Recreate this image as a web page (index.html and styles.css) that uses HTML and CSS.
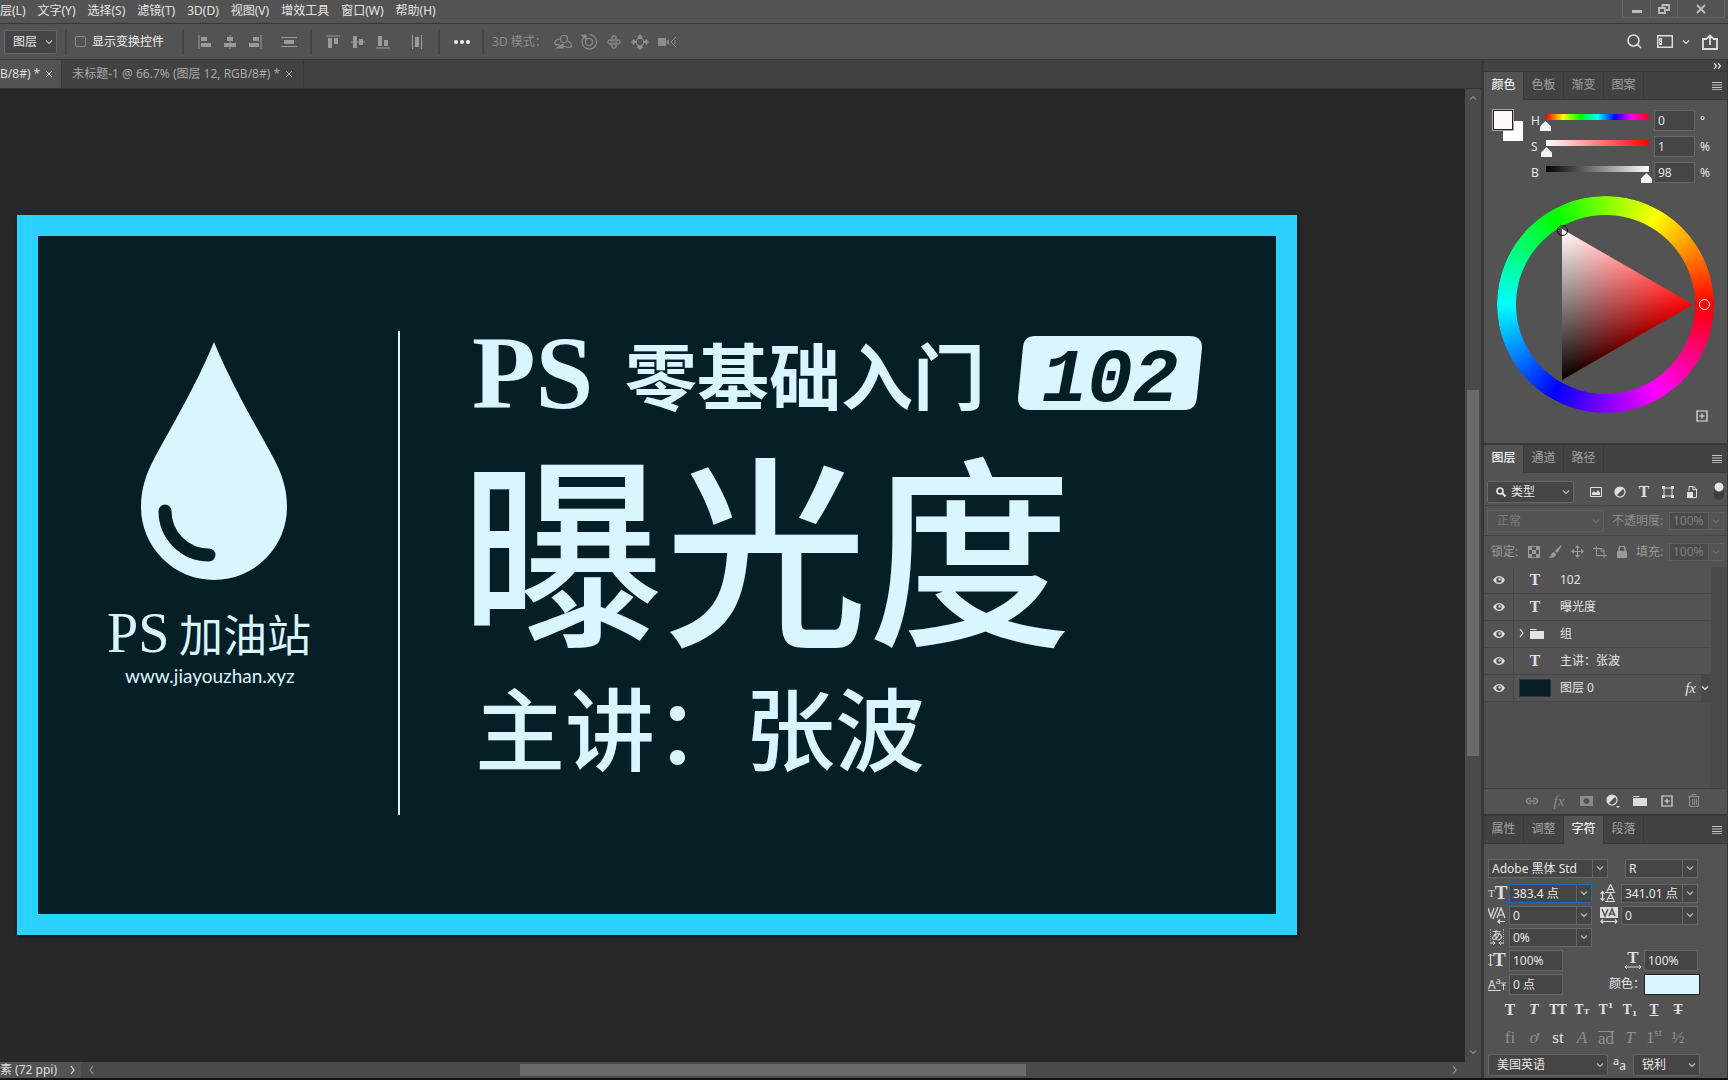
FILE: index.html
```html
<!DOCTYPE html>
<html lang="zh-CN">
<head>
<meta charset="utf-8">
<title>未标题-1</title>
<link rel="stylesheet" href="styles.css">
</head>
<body>
<svg class="defs" aria-hidden="true">
  <symbol id="chev" viewBox="0 0 8 8"><path d="M1 2.500l3 3 3-3" fill="none" stroke="currentColor" stroke-width="1.200"/></symbol>
  <symbol id="chevr" viewBox="0 0 8 10"><path d="M2 1l3 4-3 4" fill="none" stroke="currentColor" stroke-width="1.200"/></symbol>
  <symbol id="burger" viewBox="0 0 10 8"><path d="M0 .5h10M0 3h10M0 5.500h10M0 7.700h10" stroke="currentColor"/></symbol>
  <symbol id="eye" viewBox="0 0 12 8"><path d="M0 4C2 1 4 0 6 0s4 1 6 4c-2 3-4 4-6 4S2 7 0 4z" fill="currentColor"/><circle cx="6" cy="4" r="2.700" fill="#484848"/><circle cx="6.500" cy="3.500" r="1.200" fill="currentColor"/></symbol>
  <symbol id="folder" viewBox="0 0 14 12"><path d="M0 1h6l1 1H0zM0 3h14v8H0z" fill="currentColor"/></symbol>
  <symbol id="half" viewBox="0 0 12 12"><circle cx="6" cy="6" r="5" fill="none" stroke="currentColor" stroke-width="1.200"/><path d="M9.600 2.400A5 5 0 1 0 2.400 9.600z" fill="currentColor"/></symbol>
  <symbol id="plus" viewBox="0 0 12 12"><path d="M1 1h10v10H1zM6 3.500v5M3.500 6h5" fill="none" stroke="currentColor" stroke-width="1.200"/></symbol>
  <symbol id="close" viewBox="0 0 8 8"><path d="M1 1l6 6M7 1l-6 6" stroke="currentColor"/></symbol>
</svg>

<header class="menubar">
  <nav class="menus">
    <button>层(L)</button><button>文字(Y)</button><button>选择(S)</button><button>滤镜(T)</button><button>3D(D)</button><button>视图(V)</button><button>增效工具</button><button>窗口(W)</button><button>帮助(H)</button>
  </nav>
  <div class="winbtns">
    <button aria-label="最小化"><svg width="10" height="8" viewBox="0 0 10 8"><path d="M0 5h10v3H0z" fill="currentColor"/></svg></button>
    <button aria-label="还原"><svg width="12" height="10" viewBox="0 0 12 10"><path d="M4.500 3V1h6.500v5H8M1 4h6v5H1z" fill="none" stroke="currentColor" stroke-width="1.800"/></svg></button>
    <button aria-label="关闭" class="wide"><svg width="10" height="10" viewBox="0 0 10 10"><path d="M1 1l8 8M9 1l-8 8" stroke="currentColor" stroke-width="2"/></svg></button>
  </div>
</header>

<section class="options">
  <span class="combo target"><select aria-label="自动选择"><option>图层</option></select><svg class="cv"><use href="#chev"/></svg></span>
  <i class="sep"></i>
  <label class="check"><input type="checkbox">显示变换控件</label>
  <i class="sep"></i>
  <div class="icons align">
    <button aria-label="左对齐"><svg width="14" height="14"><path d="M1 0v14" stroke="currentColor"/><path d="M3 2h6v4H3zM3 8h10v4H3z" fill="currentColor"/></svg></button>
    <button aria-label="水平居中"><svg width="14" height="14"><path d="M7 0v14" stroke="currentColor"/><path d="M4 2h6v4H4zM1 8h12v4H1z" fill="currentColor"/></svg></button>
    <button aria-label="右对齐"><svg width="14" height="14"><path d="M13 0v14" stroke="currentColor"/><path d="M5 2h6v4H5zM1 8h10v4H1z" fill="currentColor"/></svg></button>
  </div>
  <button class="ic" aria-label="垂直分布"><svg width="16" height="12"><path d="M0 1.500h16M0 10.500h16" stroke="currentColor"/><path d="M3 4h10v4H3z" fill="currentColor"/></svg></button>
  <i class="sep"></i>
  <div class="icons align">
    <button aria-label="顶对齐"><svg width="14" height="14"><path d="M0 1h14" stroke="currentColor"/><path d="M2 3h4v10H2zM8 3h4v6H8z" fill="currentColor"/></svg></button>
    <button aria-label="垂直居中"><svg width="14" height="14"><path d="M0 7h14" stroke="currentColor"/><path d="M2 1h4v12H2zM8 4h4v6H8z" fill="currentColor"/></svg></button>
    <button aria-label="底对齐"><svg width="14" height="14"><path d="M0 13h14" stroke="currentColor"/><path d="M2 1h4v10H2zM8 5h4v6H8z" fill="currentColor"/></svg></button>
  </div>
  <button class="ic" aria-label="水平分布"><svg width="12" height="14"><path d="M1.500 0v14M10.500 0v14" stroke="currentColor"/><path d="M4 2h4v10H4z" fill="currentColor"/></svg></button>
  <i class="sep"></i>
  <button class="ic bright" aria-label="更多"><svg width="16" height="6"><g fill="currentColor"><circle cx="2" cy="3" r="2"/><circle cx="8" cy="3" r="2"/><circle cx="14" cy="3" r="2"/></g></svg></button>
  <i class="sep"></i>
  <span class="mode">3D 模式：</span>
  <div class="icons three">
    <button aria-label="环绕"><svg width="18" height="14" viewBox="0 0 18 14" fill="none" stroke="currentColor" stroke-width="1.200"><circle cx="10" cy="4" r="3.500"/><path d="M6 4C2 4 0 7 1 9c1 1 3 1 5 1M14 6c3 2 4 4 3 6-2 1-5 0-8-1"/><path d="M3 13h6V9z" fill="currentColor"/></svg></button>
    <button aria-label="滚动"><svg width="16" height="16" viewBox="0 0 16 16" fill="none" stroke="currentColor" stroke-width="1.200"><circle cx="8" cy="8" r="3.500"/><path d="M5 1.500a7.200 7.200 0 1 0 4-.8M2.500 3.500A7 7 0 0 0 1 8"/><path d="M1 1.500l4-.5v4z" fill="currentColor"/></svg></button>
    <button aria-label="平移"><svg width="16" height="16" viewBox="0 0 16 16" fill="none" stroke="currentColor" stroke-width="1.200"><path d="M7 7V5H6A2.200 2.200 0 1 1 10 5H9v2h2V6a2.200 2.200 0 1 1 0 4V9H9v2h1a2.200 2.200 0 1 1-4 0h1V9H5v1A2.200 2.200 0 1 1 5 6v1z"/></svg></button>
    <button aria-label="滑动"><svg width="18" height="16" viewBox="0 0 18 16" fill="currentColor"><path d="M9 0l3 3-2 1v1H8V4L6 3zM9 16l3-2.500-1-2.500H7l-1 2.500zM0 8l3-3 1 2h2v2H4l-1 2zM18 8l-3-3-1 2h-2v2h2l1 2z"/><circle cx="9" cy="8" r="4" fill="none" stroke="currentColor"/></svg></button>
    <button aria-label="缩放"><svg width="18" height="12" viewBox="0 0 18 12"><path d="M0 2h8v8H0zM8 6l3-3v6z" fill="currentColor"/><path d="M18 1l-5 5 5 5M17 4v4" fill="none" stroke="currentColor"/></svg></button>
  </div>
  <div class="icons tools">
    <button aria-label="搜索"><svg width="15" height="15" viewBox="0 0 15 15" fill="none" stroke="currentColor" stroke-width="1.600"><circle cx="6.500" cy="6.500" r="5.500"/><path d="M10.500 10.500L14 14"/></svg></button>
    <button class="ws" aria-label="工作区"><svg width="16" height="13" viewBox="0 0 16 13"><path d="M.7.7h14.600v11.600H.7z" fill="none" stroke="currentColor" stroke-width="1.400"/><path d="M2 3h3v7H2z" fill="currentColor"/><path d="M3 5h1M3 7.500h1" stroke="#535353"/></svg><svg width="8" height="8"><use href="#chev"/></svg></button>
    <button aria-label="共享"><svg width="16" height="16" viewBox="0 0 16 16" fill="none" stroke="currentColor" stroke-width="1.800"><path d="M5 5H1v10h14V5h-4M8 11V2M5 4.500L8 1.500l3 3"/></svg></button>
  </div>
</section>

<div class="workspace">
  <main class="document">
    <div class="doctabs">
      <button class="doctab on">B/8#) *<svg width="8" height="8"><use href="#close"/></svg></button>
      <button class="doctab">未标题-1 @ 66.7% (图层 12, RGB/8#) *<svg width="8" height="8"><use href="#close"/></svg></button>
    </div>
    <div class="stage">
      <div class="pasteboard">
        <article class="artboard">
          <div class="brand">
            <svg class="drop" width="146" height="238" viewBox="0 0 146 238"><path d="M73 0C92 46 117 87 133 117 141 132 146 147 146 165a73 73 0 0 1-146 0C0 147 5 132 13 117 29 87 54 46 73 0z" fill="#d9f6ff"/><path d="M24 169a44 44 0 0 0 44 44" fill="none" stroke="#061f27" stroke-width="13" stroke-linecap="round"/></svg>
            <p class="brandname"><span class="latin">PS</span>加油站</p>
            <p class="url">www.jiayouzhan.xyz</p>
          </div>
          <div class="copy">
            <div class="series"><span class="ps">PS</span><span class="course">零基础入门</span>
              <span class="badge"><svg width="184" height="74" viewBox="0 0 184 74"><path d="M17 0H172Q184 0 184 12L179 61Q178 74 166 74H12Q0 74 0 62L5 11Q6 0 17 0z" fill="#d9f6ff"/></svg><b>102</b></span></div>
            <h1>曝光度</h1>
            <p class="speaker">主讲：张波</p>
          </div>
        </article>
      </div>
      <div class="vscroll"><svg width="8" height="8" class="up"><use href="#chev"/></svg><i></i><svg width="8" height="8" class="down"><use href="#chev"/></svg></div>
    </div>
    <footer class="status">
      <div class="info"><span>素 (72 ppi)</span><svg width="8" height="10"><use href="#chevr"/></svg></div>
      <svg width="8" height="10" class="flip"><use href="#chevr"/></svg>
      <div class="htrack"><i></i></div>
      <svg width="8" height="10"><use href="#chevr"/></svg>
      <span class="corner"></span>
    </footer>
  </main>

  <aside class="panels">
    <div class="strip"><svg width="8" height="6" viewBox="0 0 8 6"><path d="M1 0l2.500 3L1 6M5 0l2.500 3L5 6" fill="none" stroke="currentColor" stroke-width="1.200"/></svg></div>
    <section class="panel">
      <div class="tabs"><button class="on">颜色</button><button>色板</button><button>渐变</button><button>图案</button><svg class="burger" width="10" height="8"><use href="#burger"/></svg></div>
      <div class="color">
        <div class="hsb">
          <div class="swatches"><i class="bgc"></i><i class="fgc"></i></div>
          <div class="sliders">
            <div class="sl"><label for="h">H</label><input id="h" class="hue" type="range" min="0" max="360" value="0"><input type="text" aria-label="H 值" value="0"><span>°</span></div>
            <div class="sl"><label for="s">S</label><input id="s" class="sat" type="range" value="1"><input type="text" aria-label="S 值" value="1"><span>%</span></div>
            <div class="sl"><label for="b">B</label><input id="b" class="bri" type="range" value="98"><input type="text" aria-label="B 值" value="98"><span>%</span></div>
          </div>
        </div>
        <div class="wheel"><div class="ring"></div><div class="tri"></div><i class="mark dark"></i><i class="mark light"></i></div>
        <button class="add" aria-label="添加到色板"><svg width="12" height="12"><use href="#plus"/></svg></button>
      </div>
    </section>

    <section class="panel">
      <div class="tabs"><button class="on">图层</button><button>通道</button><button>路径</button><svg class="burger" width="10" height="8"><use href="#burger"/></svg></div>
      <div class="row filter">
        <span class="combo type"><svg class="mag" width="10" height="10" viewBox="0 0 10 10" fill="none" stroke="currentColor"><circle cx="4" cy="4" r="3" stroke-width="1.600"/><path d="M6 6l3.500 3.500" stroke-width="2"/></svg><select aria-label="过滤类型"><option>类型</option></select><svg class="cv"><use href="#chev"/></svg></span>
        <div class="icons kinds">
          <button aria-label="像素"><svg width="12" height="10"><path d="M.5.5h11v9H.5z" fill="none" stroke="currentColor"/><path d="M2 8V6l2-2 2 2 2-3 2 3v2z" fill="currentColor"/></svg></button>
          <button aria-label="调整"><svg width="12" height="12"><use href="#half"/></svg></button>
          <button aria-label="文字" class="tee">T</button>
          <button aria-label="形状"><svg width="12" height="12"><path d="M2 2h8v8H2z" fill="none" stroke="currentColor"/><path d="M0 0h3v3H0zM9 0h3v3H9zM0 9h3v3H0zM9 9h3v3H9z" fill="currentColor"/></svg></button>
          <button aria-label="智能对象"><svg width="12" height="12"><path d="M3 5V.5h4.500L10.500 3v8.500H7M7 0v3.500h3.500" fill="none" stroke="currentColor"/><path d="M1 6h6v6H1z" fill="currentColor"/></svg></button>
        </div>
        <span class="toggle"></span>
      </div>
      <div class="row blend dim">
        <span class="combo"><select aria-label="混合模式"><option>正常</option></select><svg class="cv"><use href="#chev"/></svg></span>
        <label for="op">不透明度:</label><span class="combo num"><input id="op" type="text" value="100%"><svg class="cv"><use href="#chev"/></svg></span>
      </div>
      <div class="row lock dim">
        <span>锁定:</span>
        <div class="icons locks">
          <button aria-label="透明像素"><svg width="12" height="12"><path d="M.5.5h11v11H.5z" fill="none" stroke="currentColor"/><path d="M1 1h3v3H1zM8 1h3v3H8zM4 4h4v4H4zM1 8h3v3H1zM8 8h3v3H8z" fill="currentColor"/></svg></button>
          <button aria-label="图像像素"><svg width="13" height="13"><path d="M12 0c1 1 0 2 0 2L8 8 6 6zM5 7l2 2c0 3-4 4-7 4 2-2 2-5 5-6z" fill="currentColor"/></svg></button>
          <button aria-label="位置"><svg width="13" height="13"><path d="M6.500 1v11M1 6.500h11" stroke="currentColor"/><path d="M6.500 0L9 3H4zM6.500 13L9 10H4zM0 6.500L3 4v5zM13 6.500L10 4v5z" fill="currentColor"/></svg></button>
          <button aria-label="画板"><svg width="14" height="12"><path d="M0 2.500h9l2 2V12M3.500 0v9.500H14M8 2v3h3" fill="none" stroke="currentColor"/></svg></button>
          <button aria-label="全部"><svg width="10" height="12"><path d="M0 5h10v7H0z" fill="currentColor"/><path d="M2 5V3a3 3 0 0 1 6 0v2" fill="none" stroke="currentColor" stroke-width="1.500"/></svg></button>
        </div>
        <label for="fl">填充:</label><span class="combo num"><input id="fl" type="text" value="100%"><svg class="cv"><use href="#chev"/></svg></span>
      </div>
      <ul class="layers">
        <li><button class="eye" aria-label="可见"><svg width="12" height="8"><use href="#eye"/></svg></button><span class="thumb tee">T</span><span class="name">102</span></li>
        <li><button class="eye" aria-label="可见"><svg width="12" height="8"><use href="#eye"/></svg></button><span class="thumb tee">T</span><span class="name">曝光度</span></li>
        <li><button class="eye" aria-label="可见"><svg width="12" height="8"><use href="#eye"/></svg></button><span class="thumb group"><svg width="8" height="10"><use href="#chevr"/></svg><svg width="14" height="12"><use href="#folder"/></svg></span><span class="name">组</span></li>
        <li><button class="eye" aria-label="可见"><svg width="12" height="8"><use href="#eye"/></svg></button><span class="thumb tee">T</span><span class="name">主讲：张波</span></li>
        <li><button class="eye" aria-label="可见"><svg width="12" height="8"><use href="#eye"/></svg></button><span class="thumb"><i class="pic"></i></span><span class="name">图层 0</span><em>fx</em><span class="fold"><svg width="8" height="8"><use href="#chev"/></svg></span></li>
      </ul>
      <div class="icons layerbar">
        <button aria-label="链接" class="off"><svg width="14" height="8" viewBox="0 0 14 8" fill="none" stroke="currentColor" stroke-width="1.400"><path d="M6 1.500H4a2.500 2.500 0 0 0 0 5h2M8 1.500h2a2.500 2.500 0 0 1 0 5H8M4 4h6"/></svg></button>
        <button class="off fx">fx</button>
        <button aria-label="蒙版" class="off"><svg width="13" height="10"><path fill-rule="evenodd" d="M0 0h13v10H0zM6.500 2a3 3 0 1 0 .01 0z" fill="currentColor"/></svg></button>
        <button aria-label="调整图层"><svg width="14" height="14" viewBox="0 0 14 14"><use href="#half" width="12" height="12"/><path d="M10 12h4l-2 2z" fill="currentColor"/></svg></button>
        <button aria-label="新建组"><svg width="14" height="12"><use href="#folder"/></svg></button>
        <button aria-label="新建图层"><svg width="12" height="12"><use href="#plus"/></svg></button>
        <button aria-label="删除" class="off"><svg width="12" height="13"><path d="M0 2.500h12M4 2V.5h4V2M1.500 3v9.500h9V3M4.500 5v6M6.500 5v6M8.500 5v6" fill="none" stroke="currentColor"/></svg></button>
      </div>
    </section>

    <section class="panel last">
      <div class="tabs"><button>属性</button><button>调整</button><button class="on">字符</button><button>段落</button><svg class="burger" width="10" height="8"><use href="#burger"/></svg></div>
      <div class="chars">
        <span class="combo face"><input type="text" aria-label="字体" value="Adobe 黑体 Std"><svg class="cv"><use href="#chev"/></svg></span>
        <span class="combo style"><input type="text" aria-label="样式" value="R"><svg class="cv"><use href="#chev"/></svg></span>

        <label class="gi" for="c1"><small>T</small><big>T</big></label><span class="combo focus"><input id="c1" type="text" value="383.4 点"><svg class="cv"><use href="#chev"/></svg></span>
        <label class="gi right" for="c2"><svg width="16" height="18" viewBox="0 0 16 18" fill="none" stroke="currentColor" stroke-width="1.200"><path d="M2.500 8v8M.5 10l2-2.500 2 2.500M.5 14l2 2.500 2-2.500M7 7.500l3.500-7 3.500 7M8.500 5.500h4M7 16.500l3.500-7 3.500 7M8.500 14.500h4M5 8.500h10M5 17.500h10"/></svg></label><span class="combo"><input id="c2" type="text" value="341.01 点"><svg class="cv"><use href="#chev"/></svg></span>

        <label class="gi" for="c3"><svg width="18" height="17" viewBox="0 0 18 17" fill="none" stroke="currentColor" stroke-width="1.200"><path d="M0 1l3 9 3-9M10 0L5 12M9 11l4-10 4 10M10.500 8h5M17 14.500h-7M12 12.500l-2 2 2 2"/></svg></label><span class="combo"><input id="c3" type="text" value="0"><svg class="cv"><use href="#chev"/></svg></span>
        <label class="gi right" for="c4"><svg width="18" height="17" viewBox="0 0 18 17" fill="none"><path d="M0 0h18v11H0z" fill="currentColor"/><path d="M2 2l3 7 3-7M9 9l3-7 3 7M10 7h4" stroke="#535353" stroke-width="1.500"/><path d="M1 14.500h16M3 12.500l-2 2 2 2M15 12.500l2 2-2 2" stroke="currentColor" stroke-width="1.200"/></svg></label><span class="combo"><input id="c4" type="text" value="0"><svg class="cv"><use href="#chev"/></svg></span>

        <label class="gi kana" for="c5"><span>あ</span><svg width="14" height="4" viewBox="0 0 14 4"><path d="M0 2h5M14 2H9M3 0l2 2-2 2M11 0L9 2l2 2" fill="none" stroke="currentColor"/></svg></label><span class="combo"><input id="c5" type="text" value="0%"><svg class="cv"><use href="#chev"/></svg></span>
        <span class="blank"></span>

        <label class="gi" for="c6"><svg width="5" height="14" viewBox="0 0 5 14"><path d="M2.500 1v12M.5 3l2-2 2 2M.5 11l2 2 2-2" fill="none" stroke="currentColor"/></svg><big>T</big></label><input class="box" id="c6" type="text" value="100%">
        <label class="gi wideT" for="c7"><b>T</b><svg width="16" height="4" viewBox="0 0 16 4"><path d="M0 2h16M2 0L0 2l2 2M14 0l2 2-2 2" fill="none" stroke="currentColor"/></svg></label><input class="box b2" id="c7" type="text" value="100%">

        <label class="gi base" for="c8"><span>A<sup>a</sup></span><svg width="5" height="12" viewBox="0 0 5 12"><path d="M0 5h5M2.500 12V6M.5 8l2-2 2 2" fill="none" stroke="currentColor"/></svg></label><input class="box" id="c8" type="text" value="0 点">
        <span class="clabel">颜色：</span><button class="box b2 tint" aria-label="文本颜色"></button>
      </div>
      <div class="styles">
        <button><b class="fat">T</b></button><button><i>T</i></button><button>TT</button><button>T<small>T</small></button><button>T<sup>1</sup></button><button>T<sub>1</sub></button><button><u>T</u></button><button><s>T</s></button>
      </div>
      <div class="styles ot">
        <button>fi</button><button><i>ơ</i></button><button class="lit">st</button><button><i>A</i></button><button><span class="over">ad</span></button><button><i>T</i></button><button>1<sup>st</sup></button><button>½</button>
      </div>
      <div class="lang">
        <span class="combo"><select aria-label="语言"><option>美国英语</option></select><svg class="cv"><use href="#chev"/></svg></span>
        <label for="aa"><sup>a</sup>a</label>
        <span class="combo aa"><select id="aa"><option>锐利</option></select><svg class="cv"><use href="#chev"/></svg></span>
      </div>
    </section>
  </aside>
</div>
<div class="edge"></div>
</body>
</html>
```
FILE: styles.css
```css
* { box-sizing: border-box; }
body {
  margin: 0;
  min-height: 100vh;
  display: flex;
  flex-direction: column;
  overflow: hidden;
  background: #535353;
  color: #e4e4e4;
  font: 12px/16px "Noto Sans", "Noto Sans CJK SC", sans-serif;
}
button, input, select { font: inherit; color: inherit; margin: 0; padding: 0; border: 0; background: none; border-radius: 0; min-width: 0; }
select { appearance: none; }
button { display: inline-flex; align-items: center; justify-content: center; white-space: nowrap; }
svg { display: block; flex: none; }
h1, p, ul { margin: 0; padding: 0; font-weight: 400; list-style: none; }
.defs { position: absolute; width: 0; height: 0; }

.menubar { display: flex; justify-content: space-between; height: 24px; border-bottom: 1px solid #383838; }
.menus { display: flex; gap: 12px; height: 22px; align-items: center; }
.winbtns { display: flex; height: 18px; margin-right: 3px; border: 1px solid #666; border-top: 0; color: #bbb; }
.winbtns button { width: 27px; }
.winbtns button + button { border-left: 1px solid #666; }
.winbtns .wide { width: 47px; }

.options { display: flex; align-items: center; height: 36px; padding-left: 4px; border-bottom: 1px solid #383838; color: #9a9a9a; }
.sep { width: 2px; height: 26px; background: #454545; flex: none; margin: 0 8px; }
.icons { display: flex; align-items: center; }
.align { gap: 11px; margin: 0 12px 0 6px; }
.options .ic { margin: 0 5px 0 7px; min-width: 16px; }
.options .bright { color: #eee; margin: 0 4px 0 6px; }
.three { gap: 9px; color: #8c8c8c; margin-left: 14px; }
.mode { color: #8c8c8c; width: 48px; white-space: nowrap; }
.tools { margin-left: auto; padding-right: 10px; gap: 12px; color: #ddd; }
.ws { gap: 9px; margin-left: 3px; }
.check { display: flex; align-items: center; gap: 6px; color: #eee; margin-right: 10px; }
.check input { appearance: none; width: 11px; height: 11px; border: 1px solid #8a8a8a; border-radius: 2px; }

.combo { display: flex; align-items: center; height: 20px; background: #454545; border: 1px solid #666; color: #e8e8e8; }
.combo select, .combo input { flex: 1; width: 100%; padding-left: 3px; height: 18px; outline: 0; }
.cv { width: 8px; height: 8px; margin: 0 3px; color: #bbb; }
.target { width: 53px; height: 24px; border-radius: 2px; }
.target select { padding-left: 8px; }

.workspace { flex: 1; display: flex; min-height: 0; }
.document { flex: 1; min-width: 0; display: flex; flex-direction: column; }
.doctabs { display: flex; height: 29px; background: #424242; border-bottom: 1px solid #333; }
.doctab { gap: 5px; padding: 0 10px; color: #a8a8a8; border-right: 1px solid #383838; }
.doctab.on { background: #535353; color: #ddd; padding: 0 8px 0 0; }
.stage { flex: 1; display: flex; min-height: 0; }
.pasteboard { flex: 1; min-width: 0; background: #282828; padding: 126px 0 0 17px; overflow: hidden; }
.artboard { display: flex; width: 1280px; height: 720px; border: 21px solid #2bd2ff; background: #061f27; color: #d9f6ff; box-shadow: 1px 2px 4px #161616; }
.brand { width: 362px; height: 484px; margin-top: 95px; border-right: 2px solid #d9f6ff; padding-top: 11px; }
.drop { margin-left: 103px; }
.brandname { display: flex; align-items: center; height: 60px; margin: 23px 0 0 69px; font: 44px/60px "Noto Sans CJK SC", sans-serif; }
.latin { font: 56px/60px "Liberation Serif", serif; width: 72px; }
.url { margin-left: 87px; font: 19px/26px "Lato", sans-serif; }
.copy { padding: 89px 0 0 60px; }
.series { display: flex; align-items: center; height: 96px; white-space: nowrap; padding-left: 12px; }
.ps { font: bold 104px/96px "Liberation Serif", serif; width: 153px; }
.course { font: bold 72px/96px "Noto Sans CJK SC", sans-serif; width: 393px; }
.badge { display: grid; align-items: center; justify-items: center; color: #061f27; }
.badge > * { grid-area: 1 / 1; }
.badge b { font: italic bold 76px/74px "Liberation Mono", monospace; padding-top: 8px; height: 74px; }
.artboard h1 { font: 500 204px/224px "Noto Sans CJK SC", sans-serif; padding-top: 9px; }
.speaker { font: 500 90px/128px "Noto Sans CJK SC", sans-serif; padding: 7px 0 0 15px; }

.vscroll { width: 16px; background: #4a4a4a; display: flex; flex-direction: column; align-items: center; color: #888; padding: 5px 0 6px; }
.vscroll i { width: 12px; height: 38%; background: #6a6a6a; }
.vscroll .up { transform: rotate(180deg); margin-bottom: 288px; }
.vscroll .down { margin-top: auto; }
.status { display: flex; align-items: center; height: 16px; background: #4a4a4a; color: #999; }
.info { width: 81px; height: 16px; background: #535353; color: #ddd; display: flex; align-items: center; justify-content: space-between; padding-right: 4px; margin-right: 6px; white-space: nowrap; }
.flip { transform: rotate(180deg); }
.htrack { flex: 1; height: 12px; padding-left: 425px; }
.htrack i { display: block; width: 506px; height: 12px; background: #6a6a6a; }
.corner { width: 22px; }

.panels { width: 247px; flex: none; display: flex; flex-direction: column; border-left: 3px solid #383838; border-right: 1px solid #383838; }
.strip { height: 12px; background: #424242; border-bottom: 1px solid #383838; display: flex; align-items: center; justify-content: flex-end; padding-right: 6px; }
.tabs { display: flex; height: 28px; background: #424242; border-bottom: 1px solid #3a3a3a; align-items: stretch; color: #a0a0a0; }
.tabs button { width: 40px; border-right: 1px solid #383838; padding-bottom: 2px; }
.tabs .on { background: #535353; color: #eee; font-weight: 500; margin-bottom: -1px; }
.burger { margin: 10px 5px 0 auto; color: #c4c4c4; }
.panel { border-bottom: 2px solid #383838; }
.last { border: 0; flex: 1; }

.color { height: 343px; padding: 10px 0 0 9px; }
.hsb { display: flex; }
.swatches { display: grid; width: 38px; height: 32px; align-content: start; }
.swatches i { grid-area: 1 / 1; width: 20px; height: 20px; }
.swatches .bgc { margin: 11px 0 0 10px; background: #fff; }
.swatches .fgc { background: #fbf9fa; border: 1px solid #222; outline: 1px solid #aaa; }
.sl { display: flex; height: 26px; align-items: flex-start; }
.sl label, .sl span { line-height: 22px; width: 14px; }
.sl span { margin-left: 5px; }
.sl input[type=range] { appearance: none; width: 114px; height: 22px; margin: 0 0 0 -5px; }
.sl input[type=range]::-webkit-slider-runnable-track { height: 22px; background: var(--g) center 4px / 103px 6px no-repeat; }
.sl input[type=range]::-webkit-slider-thumb { appearance: none; width: 11px; height: 10px; margin-top: 11px; background: #f4f4f4; clip-path: polygon(50% 0, 100% 55%, 100% 100%, 0 100%, 0 55%); }
.hue { --g: linear-gradient(90deg, red, yellow, lime, cyan, blue, magenta, red); }
.sat { --g: linear-gradient(90deg, #fff, red); }
.bri { --g: linear-gradient(90deg, #000, #fff); }
.sl input[type=text] { width: 41px; height: 21px; }
.sl input[type=text], .box { background: #454545; border: 1px solid #666; padding-left: 3px; }
.wheel { position: relative; width: 217px; height: 217px; margin: 8px 0 0 4px; }
.ring { width: 217px; height: 217px; border-radius: 50%; background: conic-gradient(from 90deg, red, magenta, blue, cyan, lime, yellow, red); mask: radial-gradient(circle, transparent 89px, #000 90px); }
.tri { position: absolute; left: 65px; top: 33px; width: 131px; height: 151px; clip-path: polygon(0 0, 100% 50%, 0 100%); background: linear-gradient(30deg, #000, #f00 130px), linear-gradient(330deg, #000 65px, #0ff 195px); background-blend-mode: screen; }
.mark { position: absolute; width: 11px; height: 11px; border: 1px solid #000; border-radius: 50%; }
.dark { left: 60px; top: 29px; }
.light { right: 4px; top: 103px; border-color: #fff; }
.add { display: flex; margin: -3px 19px 0 auto; }

.row { display: flex; align-items: center; padding-left: 3px; border-bottom: 1px solid #464646; }
.filter { height: 33px; padding-top: 6px; }
.filter .combo { width: 87px; height: 22px; border-radius: 2px; }
.mag { margin-left: 8px; }
.type select { padding-left: 5px; }
.kinds { gap: 12px; margin-left: 16px; color: #ddd; }
.kinds button { width: 12px; }
.tee { font: bold 14px/16px "DejaVu Serif", serif; color: #ddd; }
.toggle { width: 10px; height: 18px; margin: -2px 3px 0 auto; border-radius: 5px; background: radial-gradient(circle at 5px 5px, #e4e4e4 4px, #3e3e3e 5px); }
.dim { color: #8c8c8c; }
.dim .combo { background: none; border-color: #5f5f5f; color: #7d7d7d; height: 20px; }
.dim .cv { color: #707070; }
.blend { height: 30px; }
.blend .combo:first-child { width: 117px; height: 22px; }
.blend select { padding-left: 9px; }
.blend label { padding-left: 8px; white-space: nowrap; }
.dim .num { width: 55px; height: 18px; margin: 0 3px 0 auto; }
.dim .num input { border-right: 1px solid #5f5f5f; height: 16px; background: #4a4a4a; }
.lock { height: 31px; padding-left: 7px; border: 0; color: #9a9a9a; }
.lock > span:first-child { width: 36px; }
.locks { gap: 9px; width: 109px; }
.locks button { width: 13px; }
.lock label { white-space: nowrap; }
.layers { height: 221px; background: linear-gradient(90deg, transparent 227px, #4a4a4a 227px) #4f4f4f; padding-right: 16px; }
.layers li { display: flex; align-items: center; height: 27px; background: #535353; border-bottom: 1px solid #464646; }
.eye { width: 30px; height: 26px; border-right: 1px solid #484848; color: #ddd; }
.thumb { width: 42px; display: flex; justify-content: center; }
.thumb.group { gap: 4px; justify-content: flex-start; padding-left: 4px; }
.pic { width: 32px; height: 18px; background: #061f27; border: 1px solid #333; }
.name { flex: 1; padding-left: 4px; }
.layers em, .fx { font: italic 15px/16px "Liberation Serif", serif; }
.layers em { margin-right: 5px; }
.fold { width: 10px; height: 26px; display: flex; align-items: center; background: #484848; }
.layerbar { height: 26px; border-top: 1px solid #404040; padding: 0 0 2px 41px; gap: 13px; color: #ddd; }
.layerbar button { width: 14px; }
.layerbar .off { color: #8c8c8c; }

.chars { display: grid; grid-template-columns: 21px 83px 29px 77px; grid-template-rows: 28px repeat(3, 22px) 24px 24px; align-items: center; padding: 10px 0 0 4px; }
.face { grid-column: 1 / 4; width: 120px; }
.style { margin-left: 4px; }
.chars .combo { height: 19px; }
.chars .combo input { height: 17px; border-right: 1px solid #666; }
.chars .focus { border-color: #2465b5; }
.gi { display: flex; align-items: center; font-family: "Liberation Serif", serif; color: #ddd; }
.gi small { font-size: 11px; align-self: flex-end; }
.gi big { font-size: 19px; font-weight: bold; }
.gi.right { padding-left: 8px; }
.kana { flex-direction: column; align-items: flex-start; padding-left: 2px; }
.kana span { font: 12px/12px "Noto Sans CJK JP", sans-serif; border: dotted #aaa; border-width: 0 1px; }
.blank { grid-column: 3 / 5; }
.box { height: 21px; width: 54px; }
.b2 { justify-self: end; }
.wideT { flex-direction: column; padding-left: 33px; margin-right: -20px; align-items: center; }
.wideT b { font-size: 17px; line-height: 14px; }
.base span { font: 12px/14px "Noto Sans", sans-serif; text-decoration: underline; }
.base sup { font-size: 9px; line-height: 9px; }
.clabel { white-space: nowrap; padding-left: 17px; width: 50px; }
.tint { background: #d9f6ff; border-color: #222; width: 56px; margin-right: -2px; }
.styles { display: grid; grid-template-columns: repeat(8, 24px); height: 27px; padding-left: 14px; font: bold 12px/20px "DejaVu Serif", serif; color: #ddd; }
.styles small, .styles sup, .styles sub { font-size: 8px; line-height: 9px; }
.styles small { padding-top: 3px; }
.styles sup { align-self: flex-start; padding-top: 5px; }
.styles sub { align-self: flex-end; padding-bottom: 5px; }
.fat { font-size: 14px; }
.ot { height: 30px; font: 17px/20px "Liberation Serif", serif; color: #8f8f8f; }
.ot sup { font-size: 11px; }
.lit { color: #e4e4e4; }
.over { border-top: 1px solid #8f8f8f; line-height: 14px; }
.lang { display: flex; align-items: center; height: 24px; padding-left: 4px; }
.lang .combo { width: 120px; height: 22px; border-radius: 2px; }
.lang select { padding-left: 8px; }
.lang label { width: 25px; padding-left: 5px; }
.lang sup { font-size: 11px; line-height: 8px; }
.lang .aa { width: 67px; }
.edge { height: 2px; background: #111; }
```
